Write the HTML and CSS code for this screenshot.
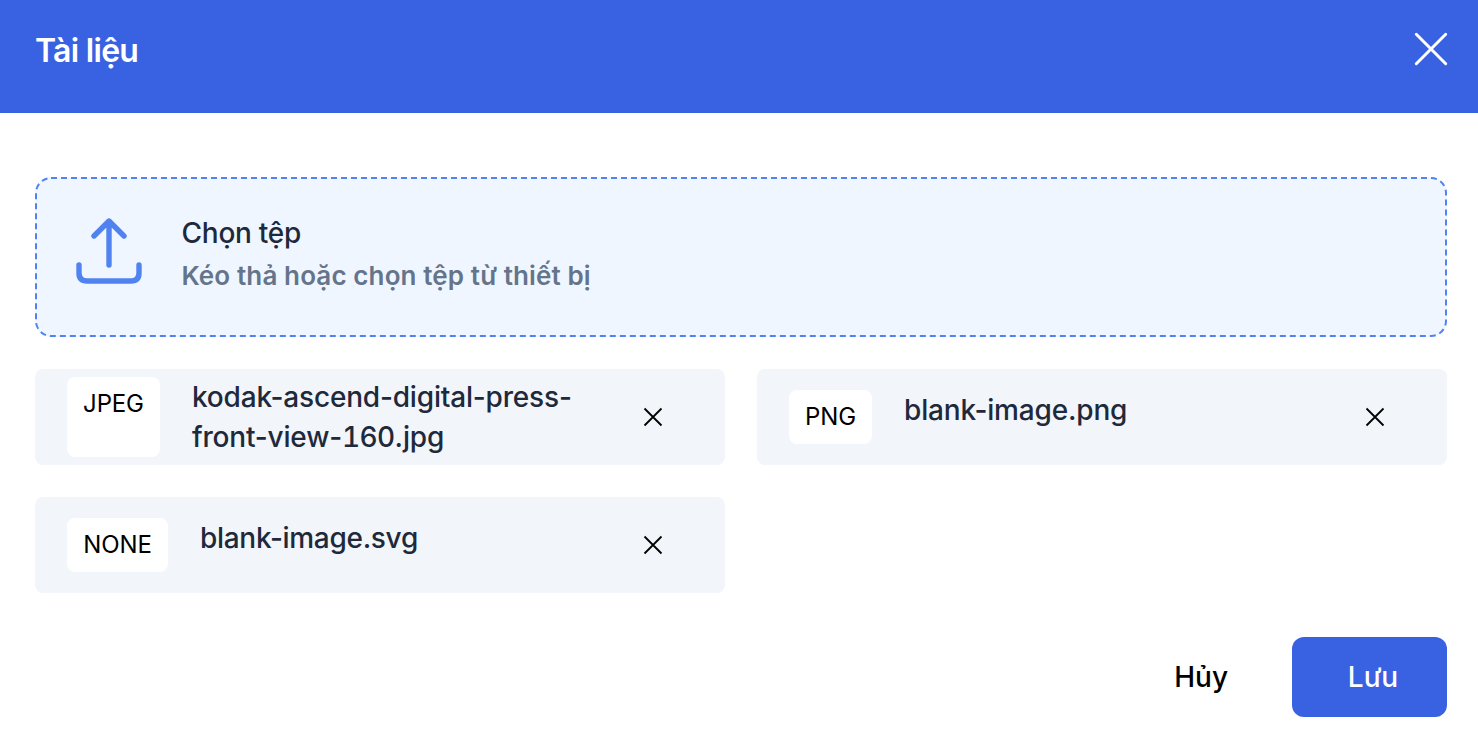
FILE: index.html
```html
<!DOCTYPE html>
<html lang="vi">
<head>
<meta charset="utf-8">
<title>Tài liệu</title>
<link rel="stylesheet" href="styles.css">
</head>
<body>
<header class="header">
  <h1 class="title">Tài liệu</h1>
  <button class="icon-button" aria-label="Đóng"><svg width="34" height="34" viewBox="0 0 34 34"><path d="M2.300 2.300l29.400 29.400M31.700 2.300l-29.400 29.400" fill="none" stroke="#fff" stroke-width="3" stroke-linecap="round"/></svg></button>
</header>
<main class="content">
  <section class="dropzone">
    <svg class="dashes" width="1412" height="160"><rect x="1" y="1" width="1410" height="158" rx="15"/></svg>
    <svg class="upload" width="66" height="66" viewBox="0 0 66 66"><path d="M33 47V4M18 18L33 3l15 15M3 47v8q0 8 8 8h44q8 0 8-8V47"/></svg>
    <div class="drop-text">
      <p class="drop-title">Chọn tệp</p>
      <p class="drop-hint">Kéo thả hoặc chọn tệp từ thiết bị</p>
    </div>
  </section>
  <section class="files">
    <article class="file">
      <span class="type type-tall">JPEG</span>
      <p class="name">kodak-ascend-digital-press-<br>front-view-<span class="digits">160</span>.jpg</p>
      <button class="icon-button remove" aria-label="Xóa"><svg width="20" height="20" viewBox="0 0 20 20"><path d="M1.500 1.500l17 17M18.500 1.500l-17 17"/></svg></button>
    </article>
    <article class="file">
      <span class="type type-png">PNG</span>
      <p class="name name-single">blank-image.png</p>
      <button class="icon-button remove" aria-label="Xóa"><svg width="20" height="20" viewBox="0 0 20 20"><path d="M1.500 1.500l17 17M18.500 1.500l-17 17"/></svg></button>
    </article>
    <article class="file">
      <span class="type type-none">NONE</span>
      <p class="name name-single name-svg">blank-image.svg</p>
      <button class="icon-button remove" aria-label="Xóa"><svg width="20" height="20" viewBox="0 0 20 20"><path d="M1.500 1.500l17 17M18.500 1.500l-17 17"/></svg></button>
    </article>
  </section>
</main>
<footer class="footer">
  <button class="cancel">Hủy</button>
  <button class="save">Lưu</button>
</footer>
</body>
</html>
```
FILE: styles.css
```css
* { box-sizing: border-box; }
body { margin: 0; background: #fff; color: #1e293b; font-family: Inter, "Liberation Sans", sans-serif; }
h1, p { margin: 0; }
button { border: 0; background: none; padding: 0; font-family: inherit; }
svg { display: block; flex: none; }
.header { display: flex; justify-content: space-between; height: 113px; padding: 32px 30px 0 35px; background: #3962e3; color: #fff; }
.title { font-size: 32px; line-height: 37px; font-weight: 560; letter-spacing: -.7px; white-space: nowrap; }
.icon-button { display: flex; align-self: flex-start; }
.content { padding: 64px 31px 0 35px; }
.dropzone { position: relative; display: flex; height: 160px; padding: 41px; gap: 39.5px; border-radius: 16px; background: #eff6ff; }
.dashes { position: absolute; inset: 0; fill: none; stroke: #5083ef; stroke-width: 2; stroke-dasharray: 6 4; }
.upload { fill: none; stroke: #5083ef; stroke-width: 5.4; stroke-linecap: round; stroke-linejoin: round; }
.drop-text { margin-top: -5px; white-space: nowrap; }
.drop-title { font-size: 28px; line-height: 41px; font-weight: 520; letter-spacing: -.25px; }
.drop-hint { font-size: 26px; line-height: 40px; margin-top: 2px; font-weight: 630; letter-spacing: .12px; color: #64748b; }
.files { display: grid; grid-template-columns: 690px 690px; gap: 32px; margin-top: 32px; }
.file { display: flex; align-items: center; height: 96px; padding: 0 62px 0 32px; border-radius: 8px; background: #f2f5fa; }
.type { flex: none; width: 93px; height: 54px; border-radius: 8px; background: #fff; color: #000; font-size: 24px; line-height: 54px; letter-spacing: -.15px; text-align: center; }
.type-tall { height: 80px; }
.type-png { width: 83px; }
.type-none { width: 101px; }
.name { margin-left: 32px; font-size: 28px; line-height: 41px; font-weight: 540; letter-spacing: -.18px; white-space: nowrap; }
.type-tall + .name { line-height: 40px; }
.name-single { margin-top: -13px; }
.name-svg { letter-spacing: -.3px; }
.digits { font-variant-numeric: tabular-nums; letter-spacing: -.6px; }
.remove { align-self: center; margin-left: auto; }
.remove svg { fill: none; stroke: #000; stroke-width: 1.8; }
.footer { display: flex; justify-content: flex-end; gap: 64px; padding: 44px 31px 0 0; }
.cancel, .save { height: 80px; font-size: 28px; font-weight: 550; }
.cancel { color: #000; }
.save { width: 155px; padding-left: 7px; border-radius: 12px; background: #3962e3; color: #fff; }
```
